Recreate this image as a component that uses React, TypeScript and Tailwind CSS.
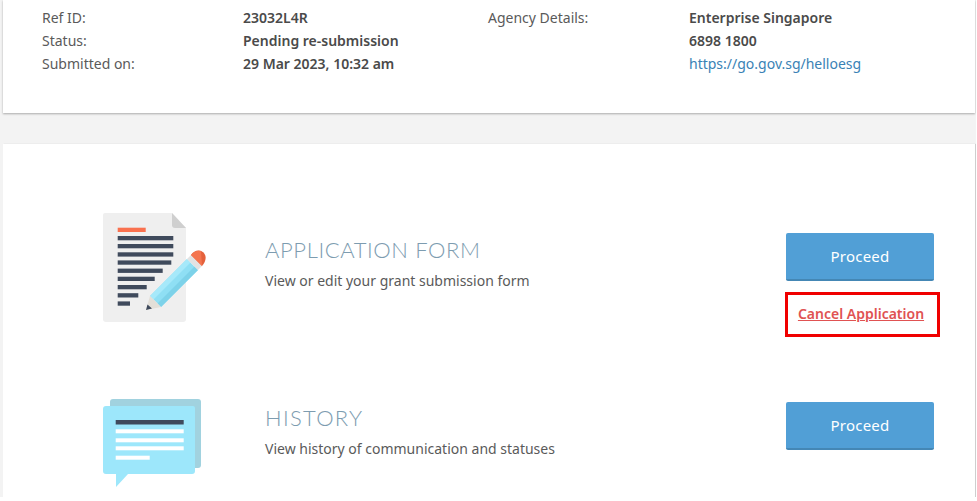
import React from "react";

function FormIcon() {
  return (
    <svg width="110" height="110" viewBox="0 0 110 110">
      <path d="M5 0H72L86 15V106a3 3 0 0 1-3 3H6a3 3 0 0 1-3-3V2a2 2 0 0 1 2-2Z" fill="#efefef" />
      <path d="M72 0L86 15H75a3 3 0 0 1-3-3Z" fill="#cfcfcf" />
      <rect x="17.7" y="14.7" width="28" height="4.3" fill="#f9714f" />
      <rect x="17.7" y="23" width="55.6" height="4.3" fill="#3f4a5c" />
      <rect x="17.7" y="31" width="55.6" height="4.3" fill="#3f4a5c" />
      <rect x="17.7" y="39.3" width="55.6" height="4.3" fill="#3f4a5c" />
      <rect x="17.7" y="47.4" width="53.6" height="4.3" fill="#3f4a5c" />
      <rect x="17.7" y="55.6" width="45" height="4.3" fill="#3f4a5c" />
      <rect x="17.7" y="63.7" width="37" height="4.3" fill="#3f4a5c" />
      <rect x="17.7" y="72" width="29" height="4.3" fill="#3f4a5c" />
      <rect x="17.7" y="80.2" width="20.6" height="4.3" fill="#3f4a5c" />
      <rect x="17.7" y="88.4" width="12.3" height="4.3" fill="#3f4a5c" />
      <path d="M50 83L87 46L98 57L61 94Z" fill="#8fdff4" />
      <path d="M50 83L87 46L90.5 49.5L53.5 86.5Z" fill="#a6e9fa" />
      <path d="M57.5 90.5L94.5 53.5L98 57L61 94Z" fill="#7dd2e9" />
      <path d="M87 46L91 42L102 53L98 57Z" fill="#e3e3e3" />
      <path d="M91 42C94 37 100 36 103.5 39.5C107 43 106 49 102 53Z" fill="#e4613c" />
      <path d="M91 42C94 38 98 37 101 38L102 53Z" fill="#f4754f" />
      <path d="M50 83L61 94L46 97Z" fill="#e3dfd8" />
      <path d="M46 97L47.5 91.5L52 95.5Z" fill="#3f4a5c" />
    </svg>
  );
}

function ChatIcon() {
  return (
    <svg width="100" height="90" viewBox="0 0 100 90">
      <rect x="7" y="0" width="91" height="69" rx="3" fill="#a1d2df" />
      <path d="M3 7H90a2 2 0 0 1 2 2V72a3 3 0 0 1-3 3H25L13 88V75H3a3 3 0 0 1-3-3V10a3 3 0 0 1 3-3Z" fill="#9de7fb" />
      <rect x="12.7" y="21" width="68" height="4.5" fill="#3f4a5c" />
      <rect x="12.7" y="30.3" width="68" height="4" fill="#ffffff" />
      <rect x="12.7" y="39.3" width="68" height="4" fill="#ffffff" />
      <rect x="12.7" y="47.3" width="68" height="4" fill="#ffffff" />
      <rect x="12.7" y="56.7" width="34" height="4" fill="#ffffff" />
    </svg>
  );
}

function Row({ label, value }: { label: string; value: React.ReactNode }) {
  return (
    <>
      <span>{label}</span>
      <span className="font-semibold text-[#4a4a4a]">{value}</span>
    </>
  );
}

function ProceedButton() {
  return (
    <button className="h-[48px] w-[148px] rounded-[2px] border-b-2 border-[#4487b5] bg-[#519fd6] text-[15px] font-normal tracking-[0.2px] text-white">
      Proceed
    </button>
  );
}

export default function App() {
  return (
    <div className="h-[497px] w-[976px] overflow-hidden bg-[#f3f3f3] pl-[3px] font-['Noto_Sans',sans-serif] text-[14px] text-[#5a5a5a]">
      <div className="flex h-[113px] w-[972px] bg-white pl-[39px] leading-[23px] shadow-[0_1px_2px_rgba(0,0,0,0.3)]">
        <div className="grid grid-cols-[201px_245px] auto-rows-[23px] pt-[6px]">
          <Row label="Ref ID:" value="23032L4R" />
          <Row label="Status:" value="Pending re-submission" />
          <Row label="Submitted on:" value="29 Mar 2023, 10:32 am" />
        </div>
        <div className="grid grid-cols-[201px_200px] auto-rows-[23px] pt-[6px]">
          <span>Agency Details:</span>
          <span className="font-semibold text-[#4a4a4a]">Enterprise Singapore</span>
          <span />
          <span className="font-semibold text-[#4a4a4a]">6898 1800</span>
          <span />
          <a className="text-[#3a82b5]">https://go.gov.sg/helloesg</a>
        </div>
      </div>

      <div className="mt-[31px] h-[353px] w-[972px] bg-white pt-[68px] shadow-[1px_0_1px_rgba(0,0,0,0.15)]">
        <section className="flex h-[110px] items-start">
          <div className="ml-[97px] mt-[1px] w-[165px] shrink-0"><FormIcon /></div>
          <div className="pt-[25px]">
            <h2 className="font-['Lato',sans-serif] text-[22px] font-light leading-[26px] tracking-[0.6px] text-[#7d9cb0]">APPLICATION FORM</h2>
            <p className="mt-[7px] leading-[22px]">View or edit your grant submission form</p>
          </div>
          <div className="ml-auto mr-[41px] flex w-[148px] flex-col items-start pt-[21px]">
            <ProceedButton />
            <div className="-ml-px mt-[11px] flex h-[45px] w-[155px] shrink-0 items-center justify-center border-[3px] border-[#f00000] pb-[3px] pr-[3px]">
              <a className="font-semibold text-[#e05252] underline">Cancel Application</a>
            </div>
          </div>
        </section>
        <section className="mt-[77px] flex h-[100px] items-start">
          <div className="ml-[100px] w-[162px] shrink-0"><ChatIcon /></div>
          <div className="pt-[6px]">
            <h2 className="font-['Lato',sans-serif] text-[22px] font-light leading-[26px] tracking-[1.3px] text-[#7d9cb0]">HISTORY</h2>
            <p className="mt-[7px] leading-[22px]">View history of communication and statuses</p>
          </div>
          <div className="ml-auto mr-[41px] w-[148px] pt-[3px]">
            <ProceedButton />
          </div>
        </section>
      </div>
    </div>
  );
}
